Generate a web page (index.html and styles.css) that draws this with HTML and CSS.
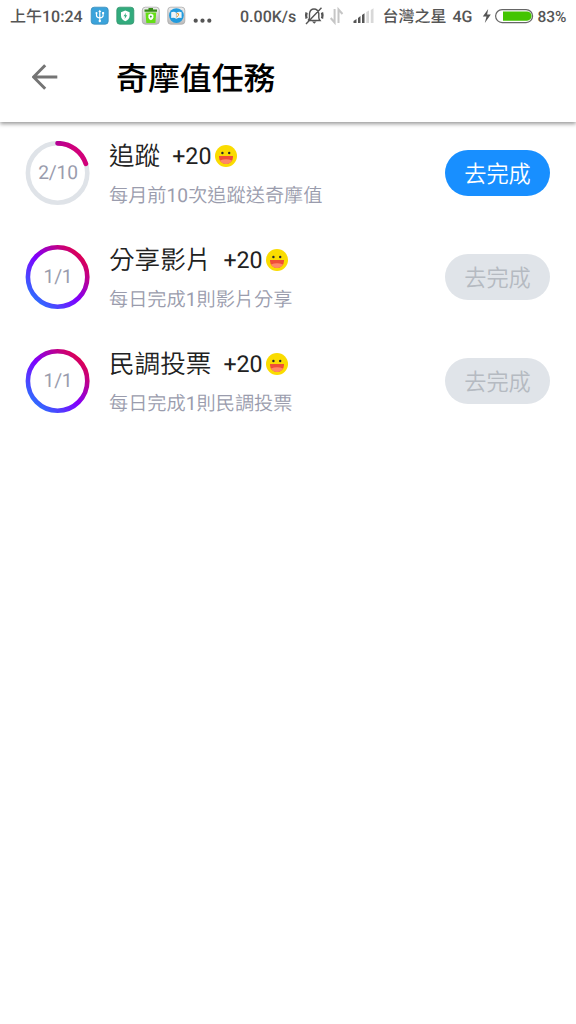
FILE: index.html
```html
<!DOCTYPE html>
<html lang="zh-Hant">
<head>
<meta charset="utf-8">
<title>奇摩值任務</title>
<link rel="stylesheet" href="styles.css">
</head>
<body>
<svg class="defs" width="0" height="0" aria-hidden="true">
  <defs>
    <linearGradient id="ring" gradientUnits="userSpaceOnUse" x1="57" y1="10" x2="11" y2="55">
      <stop offset="0" stop-color="#e0004d"/><stop offset=".55" stop-color="#7f00ff"/><stop offset="1" stop-color="#3268ff"/>
    </linearGradient>
    <linearGradient id="arc" gradientUnits="userSpaceOnUse" x1="28" y1="2" x2="48" y2="8">
      <stop offset="0" stop-color="#b00098"/><stop offset="1" stop-color="#d1007a"/>
    </linearGradient>
    <linearGradient id="silver" x2="0" y2="1"><stop stop-color="#eee"/><stop offset="1" stop-color="#bbb"/></linearGradient>
    <symbol id="smile" viewBox="0 0 22 22">
      <circle cx="11" cy="11" r="11" fill="#fadc00"/>
      <circle cx="7.4" cy="8" r="1.2" fill="#26282c"/><circle cx="14.2" cy="8" r="1.2" fill="#26282c"/>
      <path d="M4 11h14v1a7 7 0 0 1-14 0z" fill="#f04e37"/>
      <path d="M5 15.5q6-2.500 12 0A7 7 0 0 1 5 15.500z" fill="#ff8868"/>
    </symbol>
  </defs>
</svg>
<div class="status">
  <span class="clock">上午10:24</span>
  <svg class="apps" width="122" height="20" viewBox="0 0 122 20">
    <rect x="1.2" y="1.2" width="17" height="17" rx="3" fill="#3ba3db" stroke="#398dba" stroke-width=".8"/>
    <path d="M9.8 5v10M6.5 7v2.5q0 2 3.3 2.5 3.3-.5 3.3-2.5V7" fill="none" stroke="#fff" stroke-width="1.2"/>
    <path d="M8.3 6l1.5-2.2L11.3 6z" fill="#fff"/><circle cx="9.8" cy="15" r="1.2" fill="#fff"/><circle cx="6.5" cy="7" r="1" fill="#fff"/><path d="M12.1 6h2v2h-2z" fill="#fff"/>
    <rect x="26.8" y="1.2" width="17" height="17" rx="3" fill="#32ab7d" stroke="#35956f" stroke-width=".8"/>
    <path d="M35.3 4.5l4.3 1.7v3.6q0 3.8-4.3 5.5-4.3-1.7-4.3-5.5V6.2z" fill="#fff"/><path d="M36 6.7l-2.5 3.5h1.6l-.5 2.7 2.6-3.6h-1.7z" fill="#32ab7d"/>
    <rect x="52.3" y="1.2" width="17" height="17" rx="3" fill="url(#silver)" stroke="#aaa" stroke-width=".8"/>
    <path d="M54.5 3.5H67v2.3H54.5zM58.5 2H63v2h-4.5z" fill="#378c16"/><path d="M55.5 6.5h10.7L65.400 17h-9.100z" fill="#65df16"/>
    <path d="M60.9 7.5l2.5 1.2v2.5q0 2-2.500 3-2.500-1-2.500-3V8.700z" fill="#fff"/><path d="M61.2 8.7l-1.500 2.200h1l-.3 1.600 1.700-2.300h-1z" fill="#258d25"/>
    <rect x="77.8" y="1.2" width="17" height="17" rx="3" fill="url(#silver)" stroke="#aaa" stroke-width=".8"/>
    <circle cx="86.4" cy="9.6" r="7.4" fill="#229bdd"/>
    <path d="M81.2 6.2q3.300-1 5.200.7 1.900-1.700 5.200-.7v5.800q-3.300-.7-5.200 1-1.900-1.700-5.200-1z" fill="#eef5f8"/><path d="M86.400 6.700v6" stroke="#9bbac9" stroke-width=".7"/><path d="M86.600 8q1.700-1.500 2 0t-1.800 3" fill="none" stroke="#f29a26"/>
    <g fill="#555"><circle cx="105.7" cy="14.7" r="2.1"/><circle cx="112.5" cy="14.7" r="2.1"/><circle cx="119.3" cy="14.7" r="2.1"/></g>
  </svg>
  <span class="speed">0.00K/s</span>
  <svg class="signals" width="71" height="20" viewBox="0 0 71 20">
    <g fill="none" stroke="#555" stroke-width="1.4"><path d="M4.500 14.500h11.500q-1.200-1.500-1.200-3V7.500q-1-4.500-4.800-4.500T5.500 7.500v4q0 1.500-1.500 3M2 18L17.500 1.800"/><path d="M2.600 6.500q-1 3 0 6M18 6.500q1 3 0 6" stroke-width="2.400"/></g><path d="M8 15.500h4.500l-2.200 2.200z" fill="#555"/>
    <path d="M30.600 3v13.500L26.700 12M34.500 17V3.500l4 4.500" fill="none" stroke="#c6c6c6" stroke-width="2"/>
    <path d="M49.500 17v-2l3-2v4zM54 17v-5l2.500-2v7zM58 17V9l2.500-1.700V17z" fill="#555"/><path d="M62.300 17V6L65 4.500V17zM66.800 17V4l2.700-1.700V17z" fill="#d8d8d8"/>
  </svg>
  <span class="carrier">台灣之星</span><span class="net">4G</span>
  <svg class="battery" width="52" height="16" viewBox="0 0 52 16">
    <path d="M6.200 1L.8 8.600h3.700L2.800 15l6-8.500H5.100z" fill="#555"/>
    <rect x="13.600" y="1.600" width="37" height="13" rx="6.500" fill="#fff" stroke="#666" stroke-width="1.200"/>
    <path d="M21 3.500h24a4.600 4.600 0 0 1 0 9.200H21z" fill="#43c400"/>
  </svg>
  <span class="level">83%</span>
</div>
<header class="header">
  <svg class="back" width="26" height="26" viewBox="0 0 26 26"><path d="M25.300 13H2M13.200 1.200L1.500 13l11.700 11.800" fill="none" stroke="#747474" stroke-width="3"/></svg>
  <h1 class="title">奇摩值任務</h1>
</header>
<main class="tasks">
  <section class="task">
    <div class="progress">
      <svg class="ring" width="65" height="64" viewBox="-.6 0 65 64"><circle cx="32" cy="32" r="29.700" fill="none" stroke="#dfe3e8" stroke-width="4.600"/><path d="M32 2.300A29.700 29.700 0 0 1 60.250 22.800" fill="none" stroke="url(#arc)" stroke-width="4.800" stroke-linecap="round"/></svg>
      <span class="count">2/10</span>
    </div>
    <div class="info"><div class="name">追蹤<span class="points">+20</span><svg class="smile" width="22" height="22"><use href="#smile"/></svg></div><p class="desc">每月前<span class="num">10</span>次追蹤送奇摩值</p></div>
    <button class="go">去完成</button>
  </section>
  <section class="task">
    <div class="progress">
      <svg class="ring" width="65" height="64" viewBox="-.6 0 65 64"><circle cx="32" cy="32" r="29.700" fill="none" stroke="url(#ring)" stroke-width="4.600"/></svg>
      <span class="count">1/1</span>
    </div>
    <div class="info"><div class="name">分享影片<span class="points">+20</span><svg class="smile" width="22" height="22"><use href="#smile"/></svg></div><p class="desc">每日完成<span class="num">1</span>則影片分享</p></div>
    <button class="go" disabled>去完成</button>
  </section>
  <section class="task">
    <div class="progress">
      <svg class="ring" width="65" height="64" viewBox="-.6 0 65 64"><circle cx="32" cy="32" r="29.700" fill="none" stroke="url(#ring)" stroke-width="4.600"/></svg>
      <span class="count">1/1</span>
    </div>
    <div class="info"><div class="name">民調投票<span class="points">+20</span><svg class="smile" width="22" height="22"><use href="#smile"/></svg></div><p class="desc">每日完成<span class="num">1</span>則民調投票</p></div>
    <button class="go" disabled>去完成</button>
  </section>
</main>
</body>
</html>
```
FILE: styles.css
```css
* { box-sizing: border-box; }
body {
  margin: 0;
  min-height: 1024px;
  background: #fff;
  color: #212121;
  font-family: Roboto, "Noto Sans CJK TC", sans-serif;
  text-rendering: geometricPrecision;
}
.defs { position: absolute; }
.status {
  display: flex;
  align-items: center;
  height: 32px;
  padding-left: 10px;
  color: #555;
  font-size: 16px;
  font-weight: 500;
  line-height: 32px;
  white-space: nowrap;
}
.status svg { flex: none; }
.status span { padding-top: 1px; }
.clock { width: 79.5px; }
.apps { margin-right: 28.5px; }
.speed { width: 64px; }
.signals { margin-right: 7.500px; }
.carrier { width: 70px; }
.net { width: 29px; }
.battery { margin-right: 4px; }
.level { font-size: 15.5px; }
.header {
  display: flex;
  align-items: center;
  height: 90px;
  padding-left: 32px;
  box-shadow: 0 1.500px 4px rgba(0, 0, 0, .4);
  clip-path: inset(0 0 -10px 0);
}
.back { margin-right: 58px; }
.title {
  margin: 0;
  padding-top: 4px;
  color: #000;
  font-size: 31.900px;
  font-weight: 500;
  line-height: 48px;
}
.tasks { margin-top: -1px; }
.task {
  display: flex;
  align-items: center;
  height: 104px;
  padding: 0 26px 0 25px;
}
.progress {
  display: grid;
  place-items: center;
  width: 65px;
  height: 64px;
  margin-right: 19px;
}
.ring, .count { grid-area: 1 / 1; }
.ring { display: block; }
.count {
  margin: -2px 0 0 1px;
  color: #9a9cad;
  font-size: 19.2px;
  letter-spacing: -.2px;
}
.info { flex: 1; }
.name {
  display: flex;
  align-items: center;
  height: 38px;
  padding-top: 3px;
  font-size: 25.6px;
  font-weight: 350;
  line-height: 38px;
}
.points { margin: -1px 3.500px 0 12px; font-size: 23.2px; font-weight: 400; }
.smile { margin-top: -1px; }
.desc {
  margin: 6px 0 0;
  padding-top: 1px;
  color: #9a9cad;
  font-size: 19.2px;
  font-weight: 350;
  line-height: 29px;
}
.num { font-weight: 400; }
.go {
  width: 105px;
  height: 46px;
  padding: 2px 0 0;
  border: 0;
  border-radius: 23px;
  background: #188fff;
  color: #fff;
  font: 350 22.2px/44px Roboto, "Noto Sans CJK TC", sans-serif;
}
.go:disabled { background: #e0e4e9; color: #b5bac1; }
```
